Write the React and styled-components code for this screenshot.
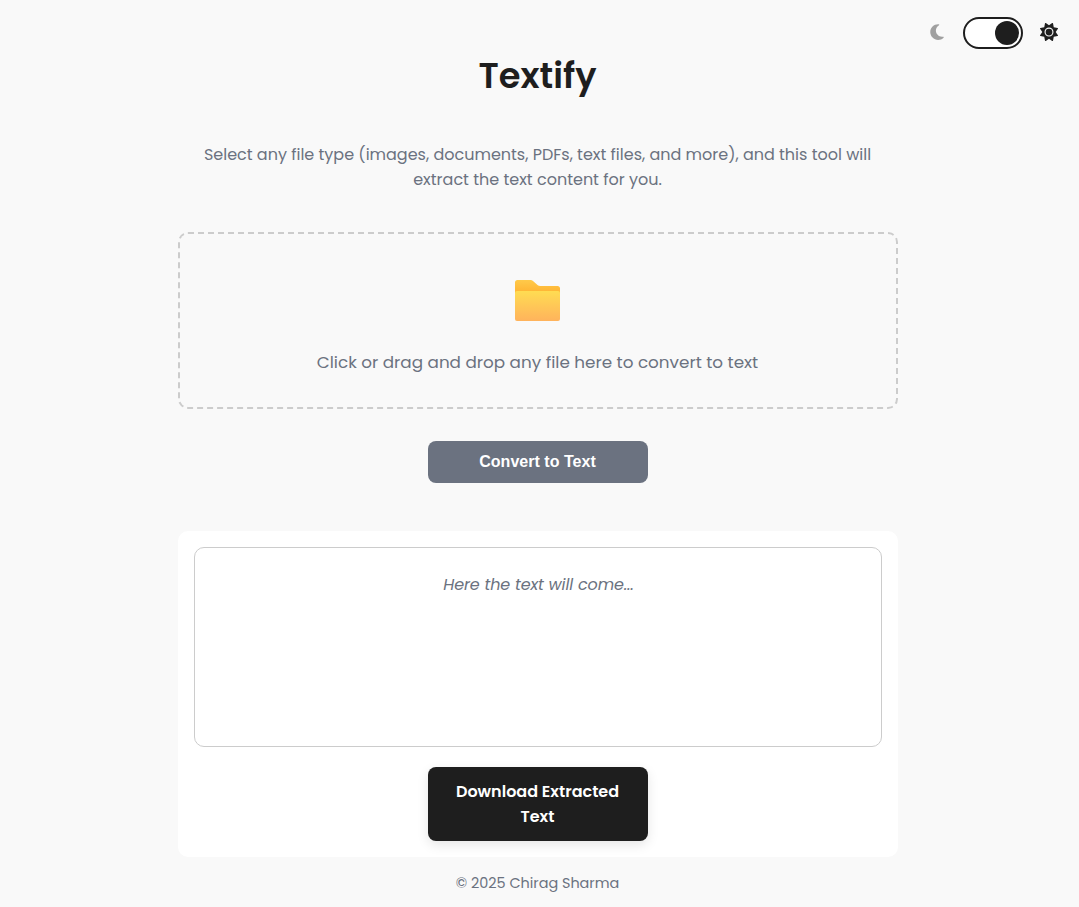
import React from "react";
import styled, { createGlobalStyle } from "styled-components";
import { FaMoon, FaSun } from "react-icons/fa6";

const GlobalStyle = createGlobalStyle`
  * { box-sizing: border-box; }
  body {
    margin: 0;
    background: #f9f9f9;
    color: #1e1e1e;
    font-family: Poppins, Inter, "Liberation Sans", sans-serif;
    font-size: 16px;
    line-height: 25px;
  }
`;

const Page = styled.div`
  position: relative;
  display: flex;
  flex-direction: column;
  align-items: center;
  min-height: 907px;
  padding: 46px 4px 0 0;
`;

const ThemeSwitch = styled.div`
  position: absolute;
  top: 17px;
  right: 21px;
  display: flex;
  align-items: center;
  height: 32px;
`;

const MoonIcon = styled(FaMoon)`
  width: 14px;
  height: 18px;
  margin: -2px 19px 0 0;
  color: #a0a0a0;
`;

const SunIcon = styled(FaSun)`
  width: 18px;
  height: 18px;
  margin: -2px 0 0 17px;
  color: #1e1e1e;
`;

const Track = styled.div`
  display: flex;
  align-items: center;
  justify-content: flex-end;
  width: 60px;
  height: 32px;
  padding: 2px;
  border: 2px solid #1e1e1e;
  border-radius: 16px;
  background: #fff;
`;

const Knob = styled.div`
  width: 24px;
  height: 24px;
  border-radius: 50%;
  background: #1e1e1e;
`;

const Title = styled.h1`
  margin: 0;
  font-size: 35.2px;
  line-height: 60px;
  font-weight: 600;
  color: #1e1e1e;
`;

const Description = styled.p`
  width: 720px;
  margin: 36px 0 0;
  text-align: center;
  color: #6b7280;
`;

const DropZone = styled.div`
  display: flex;
  flex-direction: column;
  align-items: center;
  width: 720px;
  height: 177px;
  margin-top: 40px;
  padding-top: 45px;
  border: 2px dashed #ccc;
  border-radius: 10px;
  color: #6b7280;
`;

const FolderIcon = styled.svg`
  display: block;
  width: 46px;
  height: 43px;
`;

const DropLabel = styled.p`
  margin: 28px 0 0;
  font-size: 16.8px;
`;

const Button = styled.button`
  width: 220px;
  border: none;
  border-radius: 8px;
  color: #fff;
  text-align: center;
`;

const ConvertButton = styled(Button)`
  height: 42px;
  margin-top: 32px;
  padding: 0;
  background: #6b7280;
  font: bold 16px "Liberation Sans", Arial, sans-serif;
  letter-spacing: 0.03px;
`;

const DownloadButton = styled(Button)`
  height: 74px;
  margin-top: 20px;
  padding: 12px 24px;
  background: #1e1e1e;
  font: 600 16px/25px Poppins, Inter, "Liberation Sans", sans-serif;
  box-shadow: 0 4px 12px rgba(0, 0, 0, 0.1);
`;

const OutputCard = styled.section`
  display: flex;
  flex-direction: column;
  align-items: center;
  width: 720px;
  height: 326px;
  margin-top: 48px;
  padding: 16px;
  border-radius: 10px;
  background: #fff;
`;

const OutputText = styled.div`
  width: 688px;
  height: 200px;
  padding: 24px 0 0 2px;
  border: 1px solid #ccc;
  border-radius: 10px;
  color: #6b7280;
  font-style: italic;
  letter-spacing: -0.07px;
  text-align: center;
`;

const Footer = styled.footer`
  margin-top: 14px;
  font-size: 14.4px;
  line-height: 25px;
  color: #6b7280;
`;

export default function App() {
  return (
    <>
      <GlobalStyle />
      <Page>
        <ThemeSwitch>
          <MoonIcon />
          <Track><Knob /></Track>
          <SunIcon />
        </ThemeSwitch>
        <Title>Textify</Title>
        <Description>
          Select any file type (images, documents, PDFs, text files, and more), and this tool will
          <br />
          extract the text content for you.
        </Description>
        <DropZone>
          <FolderIcon viewBox="0 0 46 43">
            <defs>
              <linearGradient id="back" x1="0" y1="0" x2="0" y2="1">
                <stop offset="0" stopColor="#ffca4a" />
                <stop offset="0.3" stopColor="#ffb636" />
              </linearGradient>
              <linearGradient id="front" x1="0" y1="0" x2="0" y2="1">
                <stop offset="0" stopColor="#ffdc52" />
                <stop offset="1" stopColor="#ffb35c" />
              </linearGradient>
            </defs>
            <path d="M0 3.5Q0 1 2.5 1H15.5Q17 1 18.3 2.2L22.8 6.3Q23.8 7 25.3 7H42.5Q45 7 45 9.5V38H0Z" fill="url(#back)" />
            <path d="M0 14Q0 12 2 12H43Q45 12 45 14V40Q45 42 43 42H2Q0 42 0 40Z" fill="url(#front)" />
          </FolderIcon>
          <DropLabel>Click or drag and drop any file here to convert to text</DropLabel>
        </DropZone>
        <ConvertButton>Convert to Text</ConvertButton>
        <OutputCard>
          <OutputText>Here the text will come...</OutputText>
          <DownloadButton>Download Extracted Text</DownloadButton>
        </OutputCard>
        <Footer>© 2025 Chirag Sharma</Footer>
      </Page>
    </>
  );
}
